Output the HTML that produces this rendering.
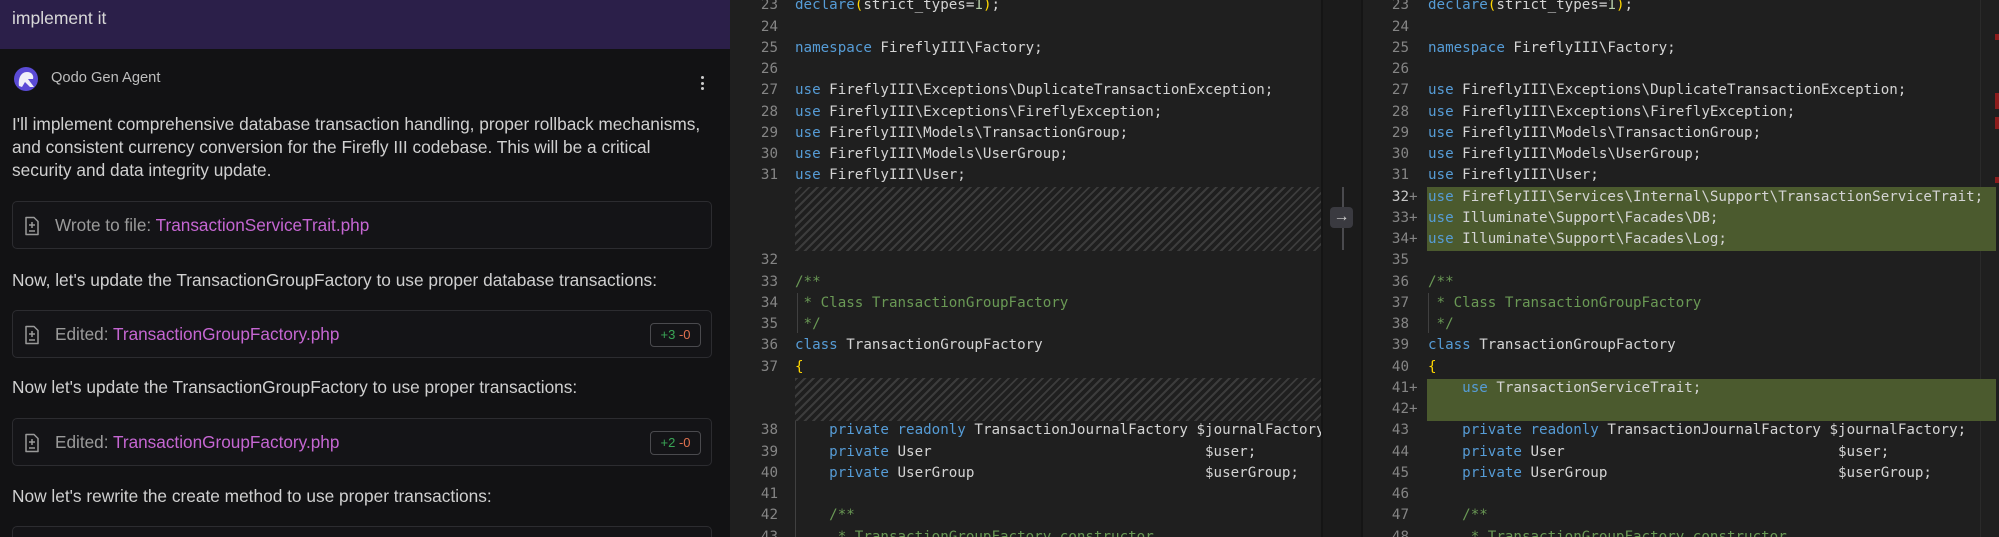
<!DOCTYPE html>
<html><head><meta charset="utf-8"><style>
*{margin:0;padding:0;box-sizing:border-box}
html{width:1999px;height:537px;overflow:hidden}
body{width:1999px;height:537px;overflow:hidden;background:#1f1f1f;position:relative;font-family:"Liberation Sans",sans-serif}
#left{position:absolute;left:0;top:0;width:730px;height:537px;background:#121214;color:#cfcfcf;overflow:hidden}
#hdr{position:absolute;left:0;top:0;width:730px;height:49px;background:#2b1f49;font-size:17.5px;line-height:18px;padding:9px 12px;color:#d8d8d8}
.t{position:absolute;left:12px;font-size:17.3px;color:#d0d0d0;white-space:nowrap}
.box{position:absolute;left:12px;width:700px;height:48px;border:1px solid #2c2c30;border-radius:5px;background:#141417}
.box svg{position:absolute;left:11px;top:14px}
.box .l{position:absolute;left:42px;top:13px;font-size:17.2px;color:#9a9a9a;white-space:nowrap}
.box .l b{font-weight:normal;color:#c566d2}
.badge{position:absolute;right:10px;top:12px;width:51px;height:24px;border:1px solid #4a4a4e;border-radius:4px;font-size:13px;line-height:22px;text-align:center}
.g{color:#3aa556}.r{color:#e0714f}
.code{position:absolute;top:-4.6px;font-family:"DejaVu Sans Mono","Liberation Mono",monospace;font-size:14.2px;line-height:21.25px;white-space:pre;color:#d4d4d4}
.num{position:absolute;top:-4.6px;font-family:"DejaVu Sans Mono",monospace;font-size:14.2px;line-height:21.25px;white-space:pre;color:#858585;text-align:right}
.k{color:#569cd6}.c{color:#6a9955}.y{color:#ffd700}.n{color:#b5cea8}
.hatch{position:absolute;background:repeating-linear-gradient(-45deg,#1f1f1f 0 4px,#3c3c3c 4px 6px)}
.grn{position:absolute;background:#4b5a2e}
</style></head><body>
<div id="left">
<div id="hdr">implement it</div>
<svg style="position:absolute;left:13px;top:66px" width="26" height="26" viewBox="0 0 26 26"><circle cx="13" cy="13" r="12" fill="#5b4bd6"/><path d="M6 20 C5 12 8 6 14 6 C19 6 21 10 20 13 L15 13 L21 21 L17 21 L12 16 L9 21 Z" fill="#f0f0f8"/></svg>
<div class="t" style="left:51px;top:70px;font-size:14.7px;color:#bdbdbd">Qodo Gen Agent</div>
<div style="position:absolute;left:701px;top:76px;width:3px">
<div style="width:3px;height:3px;background:#ccc;border-radius:50%;margin-bottom:2.5px"></div><div style="width:3px;height:3px;background:#ccc;border-radius:50%;margin-bottom:2.5px"></div><div style="width:3px;height:3px;background:#ccc;border-radius:50%"></div></div>
<div class="t" style="top:113px;line-height:23px;white-space:nowrap">I'll implement comprehensive database transaction handling, proper rollback mechanisms,<br>and consistent currency conversion for the Firefly III codebase. This will be a critical<br>security and data integrity update.</div>
<div class="box" style="top:201px"><svg width="16" height="20" viewBox="0 0 16 20"><path d="M2 1.5h8l4 4v13H2z" fill="none" stroke="#999" stroke-width="1.5" stroke-linejoin="round"/><path d="M8 6v6M5 9h6M5 15h6" stroke="#999" stroke-width="1.5"/></svg><div class="l">Wrote to file: <b>TransactionServiceTrait.php</b></div></div>
<div class="t" style="top:270px">Now, let's update the TransactionGroupFactory to use proper database transactions:</div>
<div class="box" style="top:310px"><svg width="16" height="20" viewBox="0 0 16 20"><path d="M2 1.5h8l4 4v13H2z" fill="none" stroke="#999" stroke-width="1.5" stroke-linejoin="round"/><path d="M8 6v6M5 9h6M5 15h6" stroke="#999" stroke-width="1.5"/></svg><div class="l">Edited: <b>TransactionGroupFactory.php</b></div><div class="badge"><span class="g">+3</span> <span class="r">-0</span></div></div>
<div class="t" style="top:377px">Now let's update the TransactionGroupFactory to use proper transactions:</div>
<div class="box" style="top:418px"><svg width="16" height="20" viewBox="0 0 16 20"><path d="M2 1.5h8l4 4v13H2z" fill="none" stroke="#999" stroke-width="1.5" stroke-linejoin="round"/><path d="M8 6v6M5 9h6M5 15h6" stroke="#999" stroke-width="1.5"/></svg><div class="l">Edited: <b>TransactionGroupFactory.php</b></div><div class="badge"><span class="g">+2</span> <span class="r">-0</span></div></div>
<div class="t" style="top:486px">Now let's rewrite the create method to use proper transactions:</div>
<div class="box" style="top:526px;height:30px"></div>
</div>

<!-- left code pane -->
<div class="hatch" style="left:795px;top:187px;width:526px;height:64px"></div>
<div class="hatch" style="left:795px;top:378px;width:526px;height:43px"></div>
<div style="position:absolute;left:797px;top:293px;width:1px;height:40px;background:#404040"></div>
<div style="position:absolute;left:795px;top:421px;width:1px;height:116px;background:#404040"></div>
<div class="num" style="left:740px;width:38px">23
24
25
26
27
28
29
30
31



32
33
34
35
36
37


38
39
40
41
42
43</div>
<div class="code" style="left:795px;width:526px;overflow:hidden"><span class="k">declare</span><span class="y">(</span>strict_types=<span class="n">1</span><span class="y">)</span>;

<span class="k">namespace</span> FireflyIII\Factory;

<span class="k">use</span> FireflyIII\Exceptions\DuplicateTransactionException;
<span class="k">use</span> FireflyIII\Exceptions\FireflyException;
<span class="k">use</span> FireflyIII\Models\TransactionGroup;
<span class="k">use</span> FireflyIII\Models\UserGroup;
<span class="k">use</span> FireflyIII\User;




<span class="c">/**</span>
<span class="c"> * Class TransactionGroupFactory</span>
<span class="c"> */</span>
<span class="k">class</span> TransactionGroupFactory
<span class="y">{</span>


    <span class="k">private</span> <span class="k">readonly</span> TransactionJournalFactory $journalFactory;
    <span class="k">private</span> User                                $user;
    <span class="k">private</span> UserGroup                           $userGroup;

    <span class="c">/**</span>
<span class="c">     * TransactionGroupFactory constructor.</span></div>

<!-- middle divider -->
<div style="position:absolute;left:1321px;top:0;width:42px;height:537px;background:#1b1b1b;border-left:2px solid #151515;border-right:2px solid #151515"></div>
<div style="position:absolute;left:1342px;top:187px;width:2px;height:63px;background:#4a4a4e"></div>
<div style="position:absolute;left:1330px;top:207px;width:23px;height:21px;background:#3a3a40;border-radius:4px;color:#cfcfcf;font-size:16px;line-height:20px;text-align:center">→</div>

<!-- right code pane -->
<div style="position:absolute;left:1980px;top:0;width:1px;height:537px;background:#2a2a2a"></div>
<div class="grn" style="left:1427px;top:187px;width:569px;height:64px"></div>
<div class="grn" style="left:1427px;top:379px;width:569px;height:42px"></div>
<div style="position:absolute;left:1428px;top:293px;width:1px;height:40px;background:#404040"></div>
<div style="position:absolute;left:1995px;top:34px;width:4px;height:6px;background:#8b1c1c"></div>
<div style="position:absolute;left:1995px;top:93px;width:4px;height:16px;background:#8b1c1c"></div>
<div style="position:absolute;left:1995px;top:117px;width:4px;height:12px;background:#8b1c1c"></div>
<div style="position:absolute;left:1995px;top:177px;width:4px;height:6px;background:#8b1c1c"></div>
<div class="num" style="left:1371px;width:38px">23
24
25
26
27
28
29
30
31
<span style="color:#c6c6c6">32</span>
33
34
35
36
37
38
39
40
41
42
43
44
45
46
47
48</div>
<div class="num" style="left:1409px;width:12px;text-align:left;color:#858585">








+
+
+






+
+</div>
<div class="code" style="left:1428px;width:552px;overflow:hidden"><span class="k">declare</span><span class="y">(</span>strict_types=<span class="n">1</span><span class="y">)</span>;

<span class="k">namespace</span> FireflyIII\Factory;

<span class="k">use</span> FireflyIII\Exceptions\DuplicateTransactionException;
<span class="k">use</span> FireflyIII\Exceptions\FireflyException;
<span class="k">use</span> FireflyIII\Models\TransactionGroup;
<span class="k">use</span> FireflyIII\Models\UserGroup;
<span class="k">use</span> FireflyIII\User;
<span class="k">use</span> FireflyIII\Services\Internal\Support\TransactionServiceTrait;
<span class="k">use</span> Illuminate\Support\Facades\DB;
<span class="k">use</span> Illuminate\Support\Facades\Log;

<span class="c">/**</span>
<span class="c"> * Class TransactionGroupFactory</span>
<span class="c"> */</span>
<span class="k">class</span> TransactionGroupFactory
<span class="y">{</span>
    <span class="k">use</span> TransactionServiceTrait;

    <span class="k">private</span> <span class="k">readonly</span> TransactionJournalFactory $journalFactory;
    <span class="k">private</span> User                                $user;
    <span class="k">private</span> UserGroup                           $userGroup;

    <span class="c">/**</span>
<span class="c">     * TransactionGroupFactory constructor.</span></div>
</body></html>
